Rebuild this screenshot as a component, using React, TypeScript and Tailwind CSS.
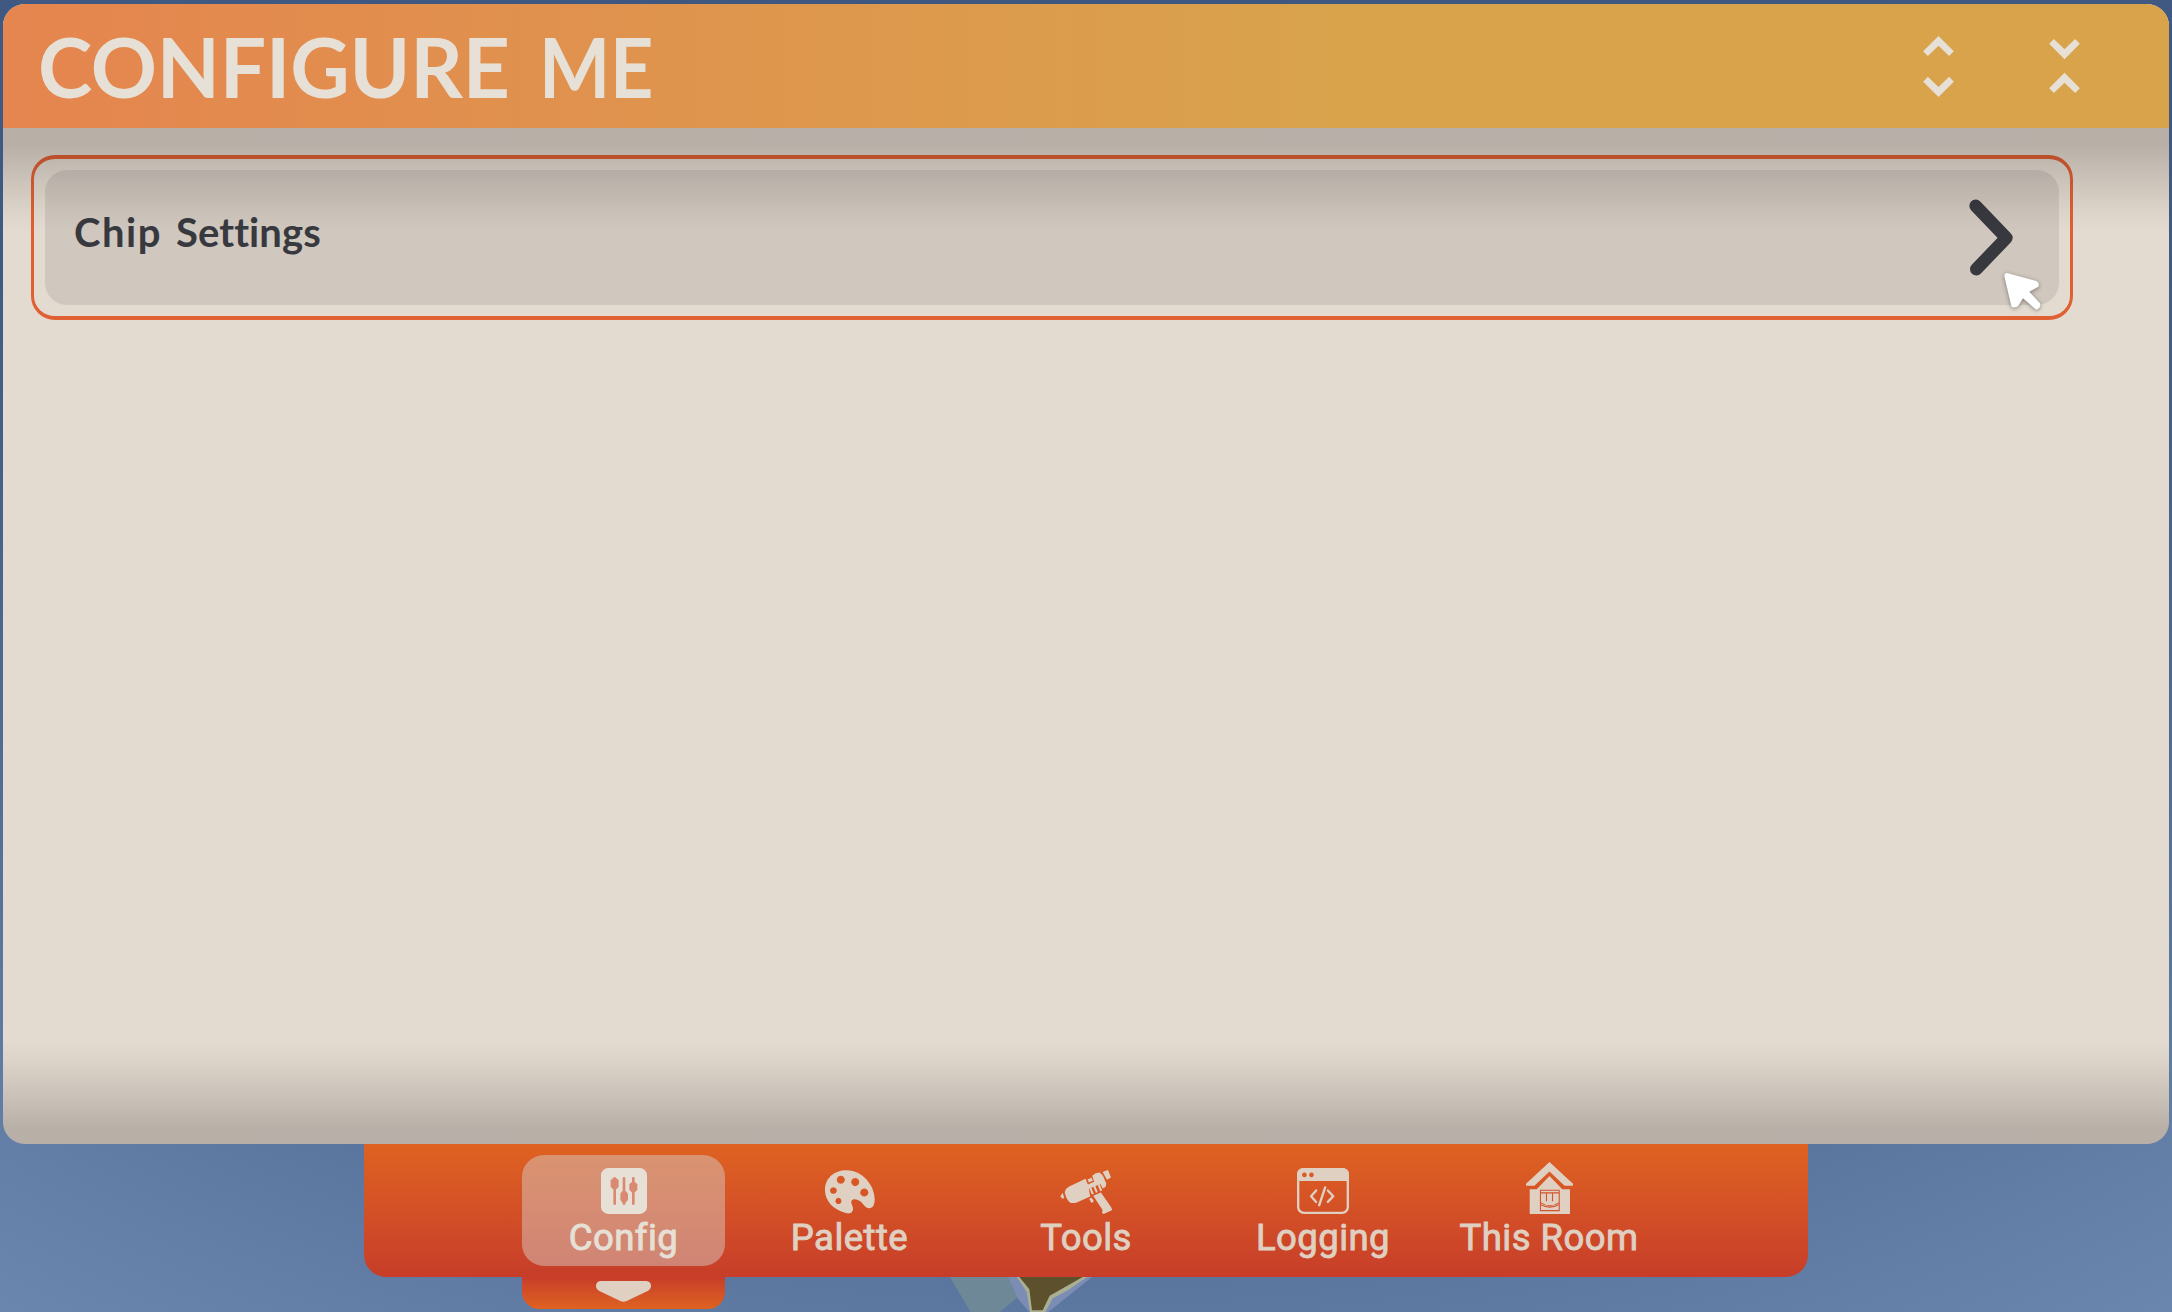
import type { ReactNode } from "react";

function ExpandIcon() {
  return (
    <svg className="h-[61px] w-[31px]" viewBox="0 0 92 183" fill="#e6e0d6">
      <path d="M46 0L92 46L78 60L46 29L14 60L0 46Z" />
      <path d="M46 183L92 137L78 122L46 153L14 122L0 137Z" />
    </svg>
  );
}

function CollapseIcon() {
  return (
    <svg className="h-[54px] w-[31px]" viewBox="0 0 92 162" fill="#e6e0d6">
      <path d="M46 61L92 14L78 0L46 31L14 0L0 14Z" />
      <path d="M46 101L92 148L78 162L46 131L14 162L0 148Z" />
    </svg>
  );
}

function ConfigIcon() {
  return (
    <svg className="h-[46px] w-[46px]" viewBox="0 0 138 138">
      <rect width="138" height="138" rx="22" fill="#e6e0d6" />
      <g stroke="#d98a70" strokeWidth="8" strokeLinecap="round">
        <path d="M41 31V107M69 31V107M97 31V107" />
      </g>
      <g fill="#d98a70">
        <path d="M35 31H47L53 37V56L46 64H36L29 56V37Z" />
        <path d="M63 70H75L81 77V95L74 104H64L58 95V77Z" />
        <path d="M91 43H103L109 49V65L102 73H92L85 65V49Z" />
      </g>
    </svg>
  );
}

function PaletteIcon() {
  return (
    <svg className="h-[44px] w-[50px]" viewBox="0 0 149 131">
      <path
        fill="#dfd0c2"
        fillRule="evenodd"
        d="M64 1C110 0 148 45 148 88C148 104 142 114 132 114C116 114 110 87 89 87C78 87 77 94 80 103C84 113 86 118 80 125C76 130 68 130 62 128C25 118 0 92 0 60C0 24 28 1 64 1ZM47 17a12 12 0 1 0 .1 0ZM90 24a12 12 0 1 0 .1 0ZM25 51a10 10 0 1 0 .1 0ZM117 55a12 12 0 1 0 .1 0ZM40 83a9 9 0 1 0 .1 0Z"
      />
    </svg>
  );
}

function ToolIcon() {
  return (
    <svg className="h-[44px] w-[53px]" viewBox="0 0 158 131" fill="#dfd0c2">
      <path d="M8 68L1 78L6 85L13 84Z" />
      <path d="M14 66Q16 55 26 50L76 26L83 43L102 35L96 17Q106 7 118 7L128 17L138 40L136 50L128 55L120 42L86 56L90 79L50 97Q38 100 29 97Q17 84 14 66Z" />
      <path d="M82 28L94 23L98 32L86 37Z" />
      <path d="M127 6L143 0L152 22L140 29Z" />
      <path d="M87 54L93 52L101 71L95 73ZM99 49L105 47L113 66L107 68ZM112 44L118 42L126 61L120 63Z" />
      <path d="M99 77L122 67L152 110L156 119L130 131L125 127L127 119Z" />
      <path d="M87 86L94 82L101 93L94 98Z" />
    </svg>
  );
}

function LoggingIcon() {
  return (
    <svg className="h-[46px] w-[52px]" viewBox="0 0 155 137">
      <rect x="3.5" y="3.5" width="148" height="130" rx="17" fill="none" stroke="#dfd0c2" strokeWidth="7" />
      <path
        fill="#dfd0c2"
        fillRule="evenodd"
        d="M0 39V20Q0 0 20 0H135Q155 0 155 20V39ZM22 13.500a7 7 0 1 0 .1 0ZM43 13.500a7 7 0 1 0 .1 0Z"
      />
      <path d="M57 67L42 84L57 101M84 58L66 111M92 67L108 84L92 101" fill="none" stroke="#dfd0c2" strokeWidth="7" strokeLinecap="round" strokeLinejoin="round" />
    </svg>
  );
}

function RoomIcon() {
  return (
    <svg className="h-[52px] w-[47px]" viewBox="0 0 140 155">
      <path fill="#dfd0c2" d="M70 0L140 65V71H115L70 28L25 71H0V65Z" />
      <path fill="#dfd0c2" d="M70 42L108 81H131V155H11V81H32Z" />
      <g fill="none" stroke="#d4522c" strokeWidth="3.200">
        <path d="M43 84H99V145H43ZM43 92H99M61 93V117M79 93V117M43 121Q71 140 99 121M43 127Q71 142 99 127" />
      </g>
    </svg>
  );
}

function Tab({ icon, label, width, active = false }: { icon: ReactNode; label: string; width: string; active?: boolean }) {
  return (
    <button
      className={`flex h-[111px] flex-col items-center rounded-[22px] ${width} ${
        active ? "bg-[#d8c8c0]/50 text-[#e6e0d6]" : "text-[#dfd0c2]"
      }`}
    >
      <span className="flex h-[59px] items-end">{icon}</span>
      <span className="mt-[2px] whitespace-nowrap font-['Roboto'] text-[36.5px] leading-[44px] tracking-[0.45px] [-webkit-text-stroke:0.9px_currentColor]">
        {label}
      </span>
    </button>
  );
}

export default function App() {
  return (
    <div className="relative flex h-[1312px] w-[2172px] flex-col overflow-hidden bg-[radial-gradient(ellipse_1983px_1562px_at_50%_0%,#3d5781_0%,#3f5983_56%,#5c779f_83%,#6a86af_100%)]">
      <svg className="absolute left-[950px] top-[1277px] h-[35px] w-[142px]" viewBox="150 441 426 105" preserveAspectRatio="none">
        <path fill="#6e8898" d="M150 441H330L355 500L300 546H212Z" />
        <path fill="#7c8db5" d="M325 441H576L445 546H388L355 508Z" />
        <path fill="#a9af91" d="M350 441H562L500 483L458 505L436 546H390L380 485Z" />
        <path fill="#5d512d" d="M358 441H548L490 474L449 497L428 541H396L388 478Z" />
      </svg>

      <main className="relative z-10 ml-[3px] mt-[4px] flex h-[1139.5px] w-[2165.5px] shrink-0 flex-col overflow-hidden rounded-[22px] bg-[#e3dbcf]">
        <header className="flex h-[124px] shrink-0 items-center justify-between bg-[linear-gradient(90deg,#e5854f_0%,#d9a34c_62%)] pl-[35px] pr-[89px]">
          <h1 className="flex gap-[29px] whitespace-nowrap font-['Lato'] text-[82px] font-bold leading-[120px] tracking-[-0.2px] text-[#e6e0d6]">
            <span>CONFIGURE</span>
            <span className="origin-left scale-x-[0.92]">ME</span>
          </h1>
          <div className="flex items-center gap-[95px]">
            <ExpandIcon />
            <CollapseIcon />
          </div>
        </header>

        <section className="relative flex-1 pl-[28px] pt-[27px]">
          <div className="h-[165px] w-[2042px] rounded-[24px] border-x-[3px] border-y-[4px] border-[#e06034] p-[11px]">
            <div className="flex h-[135px] w-[2014px] items-center justify-between rounded-[22px] bg-[#d0c7be] pl-[29px] pr-[46px]">
              <span className="-mt-[11px] flex gap-[14px] whitespace-nowrap font-['Lato'] text-[40px] font-bold leading-[48px] text-[#37393f]">
                <span className="tracking-[1.5px]">Chip</span>
                <span className="tracking-[0.1px]">Settings</span>
              </span>
              <svg className="h-[77px] w-[44px]" viewBox="0 0 132 230" fill="none">
                <path d="M20 20L112 116L22 210" stroke="#37393f" strokeWidth="38" strokeLinecap="round" strokeLinejoin="round" />
              </svg>
            </div>
          </div>
          <div className="pointer-events-none absolute inset-x-0 top-0 h-[104px] bg-[linear-gradient(180deg,rgba(8,0,6,0.195)_0%,rgba(8,0,6,0.195)_16%,rgba(8,0,6,0.13)_42%,rgba(8,0,6,0.03)_82%,transparent_100%)]" />
          <div className="pointer-events-none absolute inset-x-0 bottom-0 h-[104px] bg-[linear-gradient(0deg,rgba(8,0,6,0.195)_0%,rgba(8,0,6,0.195)_15%,rgba(8,0,6,0.13)_40%,rgba(8,0,6,0.03)_82%,transparent_100%)]" />
        </section>
      </main>

      <nav className="relative mx-auto flex h-[133.5px] w-[1444px] shrink-0 rounded-b-[22px] bg-linear-to-b from-[#df6221] to-[#c73d29] pl-[158px] pt-[11.5px]">
        <Tab icon={<ConfigIcon />} label="Config" width="w-[203px]" active />
        <Tab icon={<PaletteIcon />} label="Palette" width="w-[249px]" />
        <Tab icon={<ToolIcon />} label="Tools" width="w-[224px]" />
        <Tab icon={<LoggingIcon />} label="Logging" width="w-[250px]" />
        <Tab icon={<RoomIcon />} label="This Room" width="w-[202px]" />
      </nav>

      <div className="relative ml-[522px] flex h-[31.5px] w-[203px] shrink-0 justify-center rounded-b-[17px] bg-linear-to-b from-[#c73d29] to-[#df6221] pt-[4px]">
        <svg className="h-[21px] w-[55px]" viewBox="0 0 165 63">
          <path fill="#dfd0c2" d="M14 0H151Q165 2 165 15Q165 24 155 30L92 60Q82 65 73 60L10 30Q0 24 0 15Q0 2 14 0Z" />
        </svg>
      </div>

      <svg className="absolute left-[2003.5px] top-[272.5px] z-20 h-[38px] w-[38px] overflow-visible drop-shadow-[0_1px_2px_rgba(0,0,0,0.4)]" viewBox="0 0 114 114">
        <path fill="#fff" d="M9 0L97 24Q108 29 103 41L76 56L108 91Q112 102 102 108Q98 111 93 107L57 76L43 98Q38 105 26 103Q22 101 21 95L1 10Q1 1 9 0Z" />
      </svg>
    </div>
  );
}
